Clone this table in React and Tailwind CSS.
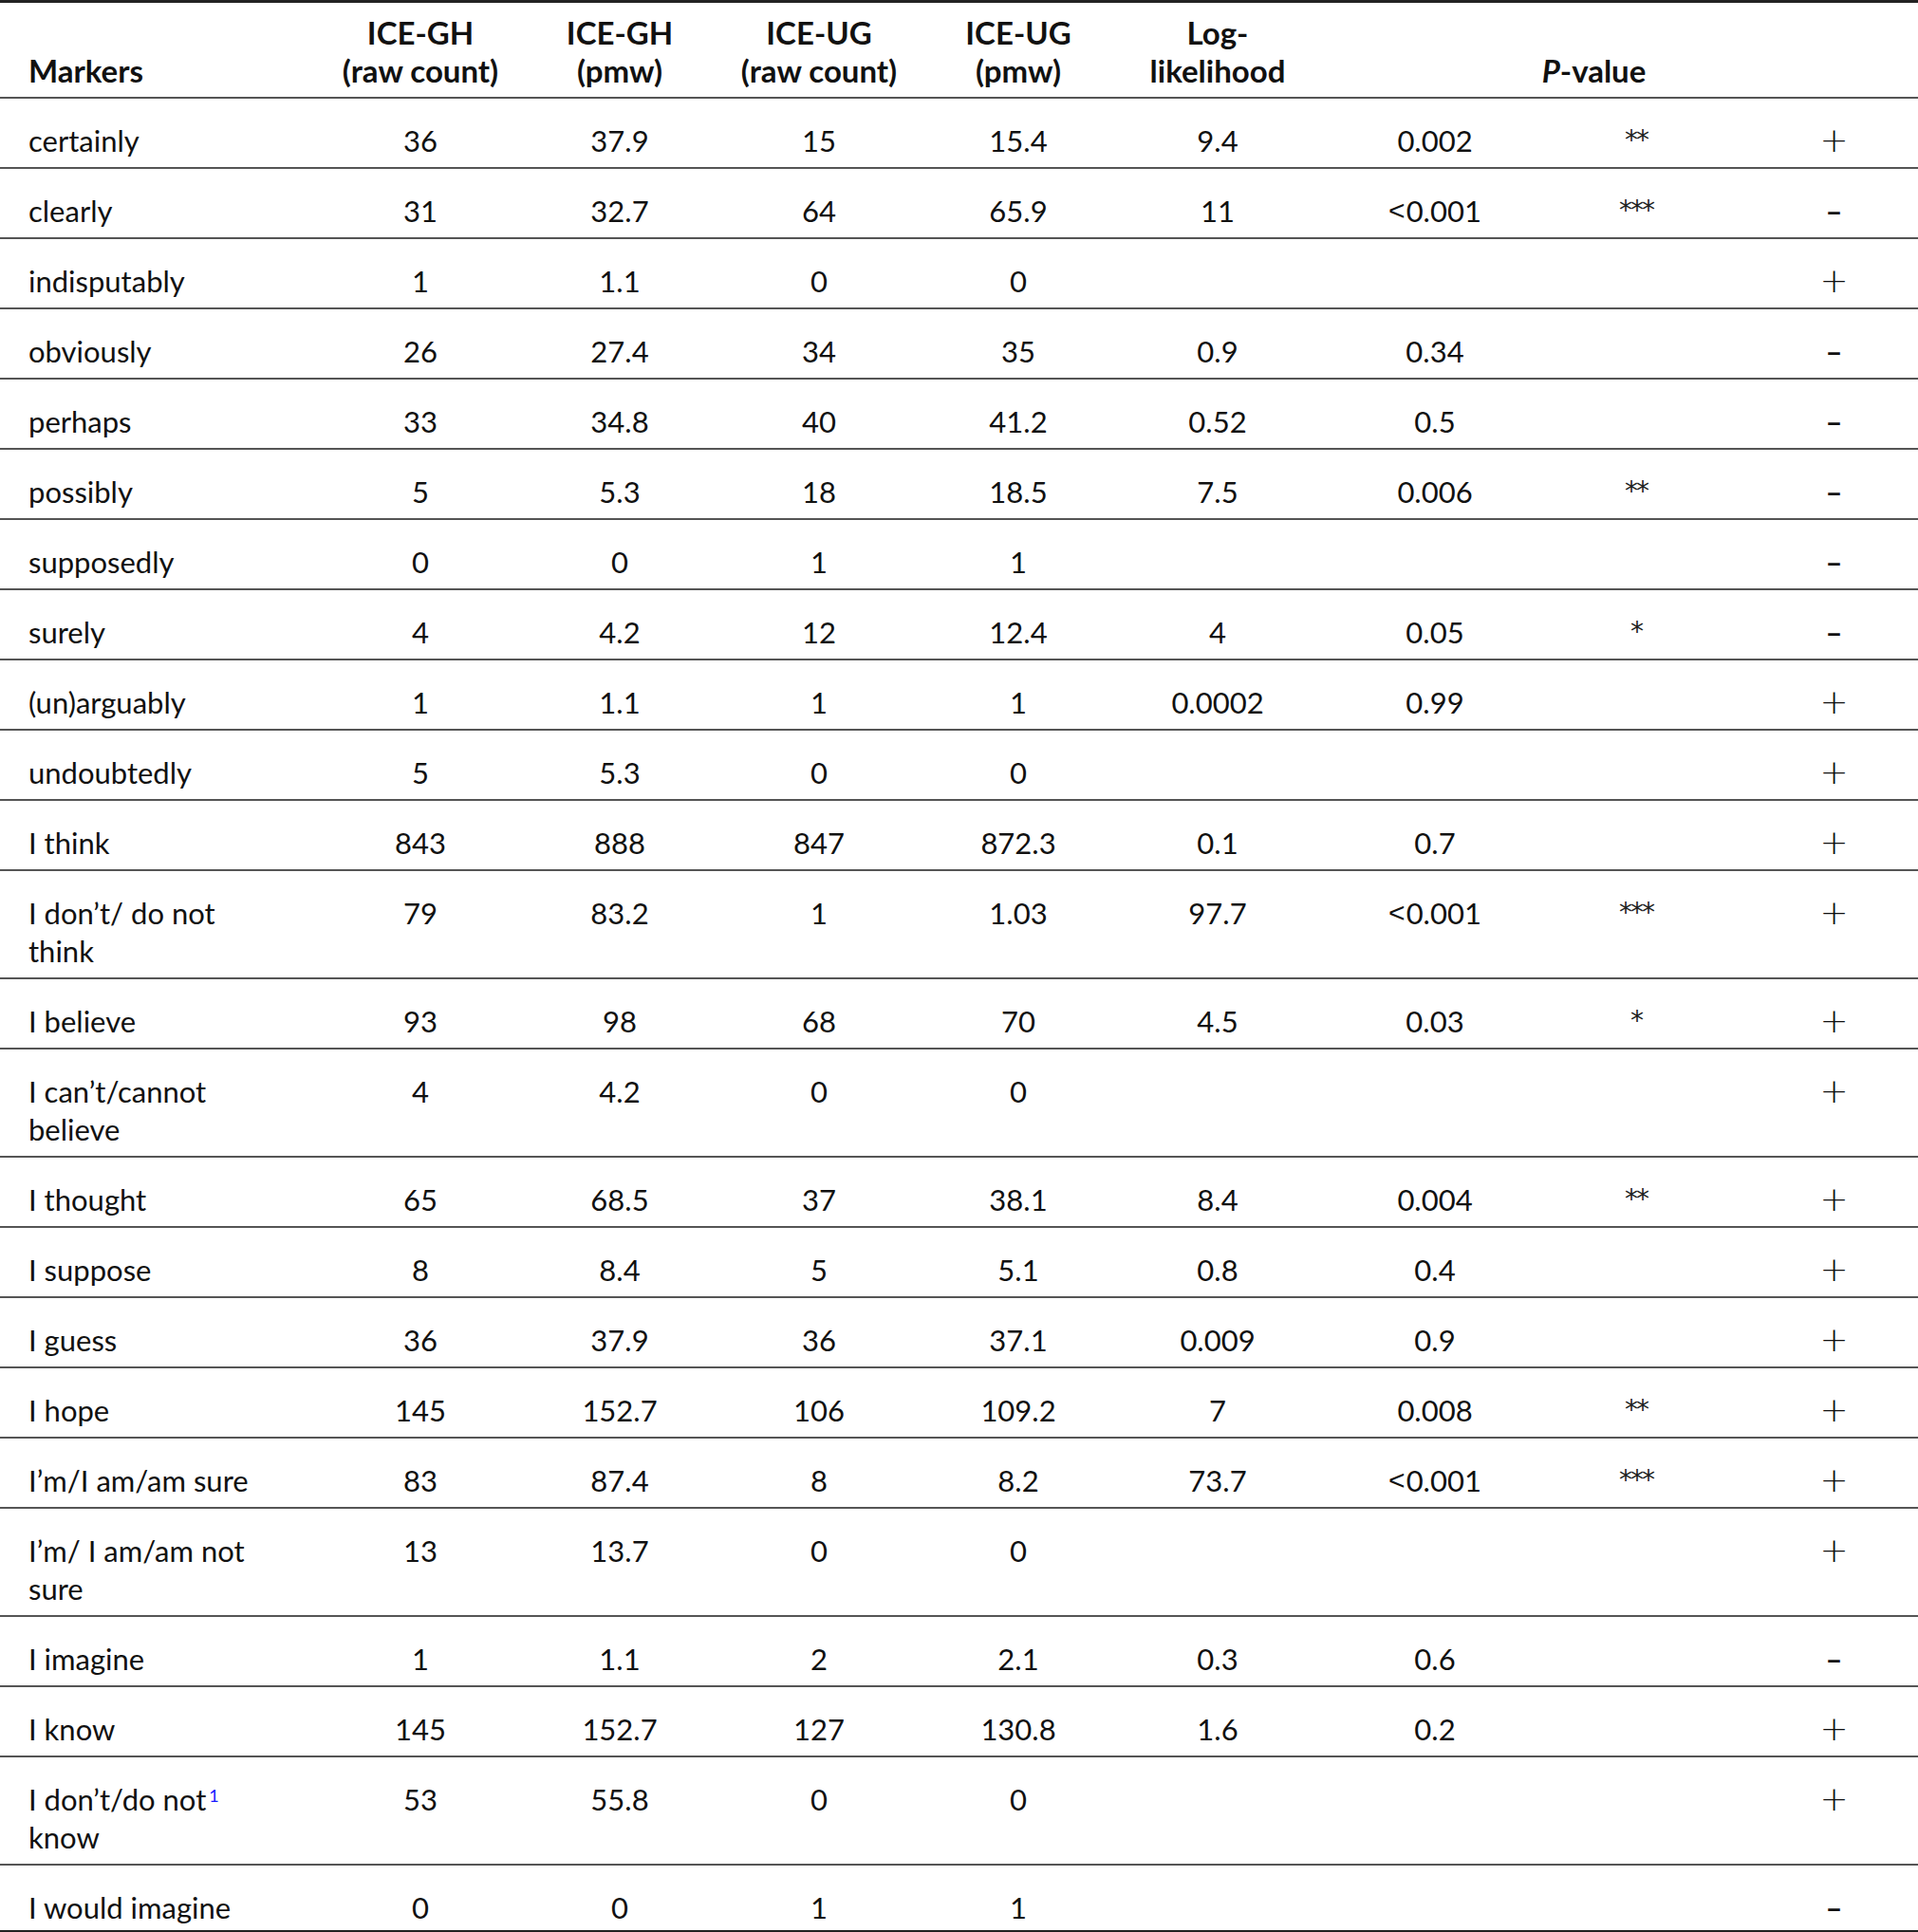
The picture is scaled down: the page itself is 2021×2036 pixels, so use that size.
import React from 'react';

// rows: marker lines, GH raw, GH pmw, UG raw, UG pmw, LL, p, stars, sign
const rows = [
    [['certainly'], '36', '37.9', '15', '15.4', '9.4', '0.002', '**', '+'],
    [['clearly'], '31', '32.7', '64', '65.9', '11', '<0.001', '***', '–'],
    [['indisputably'], '1', '1.1', '0', '0', '', '', '', '+'],
    [['obviously'], '26', '27.4', '34', '35', '0.9', '0.34', '', '–'],
    [['perhaps'], '33', '34.8', '40', '41.2', '0.52', '0.5', '', '–'],
    [['possibly'], '5', '5.3', '18', '18.5', '7.5', '0.006', '**', '–'],
    [['supposedly'], '0', '0', '1', '1', '', '', '', '–'],
    [['surely'], '4', '4.2', '12', '12.4', '4', '0.05', '*', '–'],
    [['(un)arguably'], '1', '1.1', '1', '1', '0.0002', '0.99', '', '+'],
    [['undoubtedly'], '5', '5.3', '0', '0', '', '', '', '+'],
    [['I think'], '843', '888', '847', '872.3', '0.1', '0.7', '', '+'],
    [['I don’t/ do not', 'think'], '79', '83.2', '1', '1.03', '97.7', '<0.001', '***', '+'],
    [['I believe'], '93', '98', '68', '70', '4.5', '0.03', '*', '+'],
    [['I can’t/cannot', 'believe'], '4', '4.2', '0', '0', '', '', '', '+'],
    [['I thought'], '65', '68.5', '37', '38.1', '8.4', '0.004', '**', '+'],
    [['I suppose'], '8', '8.4', '5', '5.1', '0.8', '0.4', '', '+'],
    [['I guess'], '36', '37.9', '36', '37.1', '0.009', '0.9', '', '+'],
    [['I hope'], '145', '152.7', '106', '109.2', '7', '0.008', '**', '+'],
    [['I’m/I am/am sure'], '83', '87.4', '8', '8.2', '73.7', '<0.001', '***', '+'],
    [['I’m/ I am/am not', 'sure'], '13', '13.7', '0', '0', '', '', '', '+'],
    [['I imagine'], '1', '1.1', '2', '2.1', '0.3', '0.6', '', '–'],
    [['I know'], '145', '152.7', '127', '130.8', '1.6', '0.2', '', '+'],
    [['I don’t/do not', 'know'], '53', '55.8', '0', '0', '', '', '', '+', true],
    [['I would imagine'], '0', '0', '1', '1', '', '', '', '–'],
];

function PValue({ value }) {
    if (value.startsWith('<')) {
        return (
            <span>
                <span className="inline-block h-[40px] leading-[40px] align-top [font-family:'Liberation_Sans',sans-serif] text-[30px] mr-[1px]">&lt;</span>
                {value.slice(1)}
            </span>
        );
    }
    return value;
}

export default function App() {
    const head = 'align-bottom pb-[8px] pt-[11px] h-[99px] font-bold text-[33px] leading-[40px] text-center';
    const cell = 'align-top pt-[24px] leading-[40px] text-center';

    return (
        <div className="bg-white w-[2021px] text-[#111] [font-family:Lato,'Open_Sans',sans-serif] text-[31px]">
            <table className="w-full table-fixed border-collapse border-t-[3px] border-b-[3px] border-t-[#222] border-b-[#222]">
                <colgroup>
                    <col className="w-[338px]" />
                    <col className="w-[210px]" />
                    <col className="w-[210px]" />
                    <col className="w-[210px]" />
                    <col className="w-[210px]" />
                    <col className="w-[210px]" />
                    <col className="w-[248px]" />
                    <col className="w-[176px]" />
                    <col className="w-[209px]" />
                </colgroup>
                <thead>
                    <tr className="border-b-2 border-[#555]">
                        <th className={`${head} text-left pl-[30px]`}>Markers</th>
                        <th className={head}>ICE-GH<br />(raw count)</th>
                        <th className={head}>ICE-GH<br />(pmw)</th>
                        <th className={head}>ICE-UG<br />(raw count)</th>
                        <th className={head}>ICE-UG<br />(pmw)</th>
                        <th className={head}>Log-<br />likelihood</th>
                        <th colSpan={3} className={`${head} pr-[50px]`}>
                            <i>P</i>-value
                        </th>
                    </tr>
                </thead>
                <tbody>
                    {rows.map((r, i) => {
                        const last = i === rows.length - 1;
                        const c = last ? `${cell} pb-[4px]` : `${cell} pb-[8px] border-b-2 border-[#555]`;
                        return (
                            <tr key={i}>
                                <td className={`${c} text-left pl-[30px] whitespace-nowrap`}>
                                    {r[0].map((line, j) => (
                                        <div key={j} className="h-[40px]">
                                            {line}
                                            {r[9] && j === 0 && (
                                                <sup className="text-[18px] text-[#1a1aff] ml-[3px]">1</sup>
                                            )}
                                        </div>
                                    ))}
                                </td>
                                <td className={c}>{r[1]}</td>
                                <td className={c}>{r[2]}</td>
                                <td className={c}>{r[3]}</td>
                                <td className={c}>{r[4]}</td>
                                <td className={c}>{r[5]}</td>
                                <td className={c}><PValue value={r[6]} /></td>
                                <td className={c}>
                                    <span className="inline-block h-[40px] leading-[40px] align-top [font-family:'DejaVu_Sans',sans-serif] text-[28px] tracking-[-2px] text-[#222]">{r[7]}</span>
                                </td>
                                <td className={`${c} pl-[32px]`}>
                                    {r[8] === '+' ? (
                                        <span className="inline-block h-[40px] leading-[40px] align-top [font-family:'DejaVu_Sans',sans-serif] font-extralight text-[36px]">+</span>
                                    ) : (
                                        <span className="font-bold">–</span>
                                    )}
                                </td>
                            </tr>
                        );
                    })}
                </tbody>
            </table>
        </div>
    );
}
